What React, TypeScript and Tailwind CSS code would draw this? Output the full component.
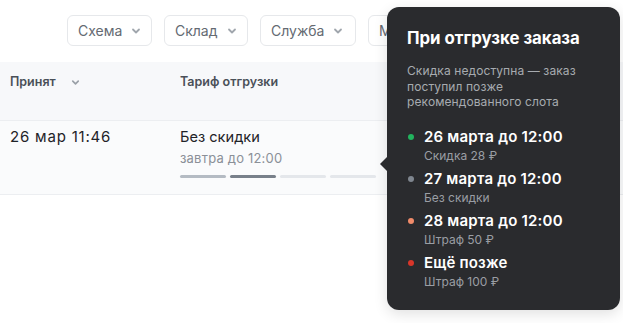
const font = { fontFamily: 'Inter, "Noto Sans", sans-serif' };

function Chevron({ className }: { className?: string }) {
  return (
    <svg viewBox="0 0 12 12" className={className} fill="none" stroke="currentColor" strokeWidth="1.8" strokeLinecap="round" strokeLinejoin="round">
      <path d="M3 4.5 6 7.5 9 4.5" />
    </svg>
  );
}

function FilterButton({ label, width }: { label: string; width: string }) {
  return (
    <button
      type="button"
      className={`flex h-[31px] ${width} shrink-0 items-center gap-2 overflow-hidden rounded-md border border-[#e6e8eb] bg-white pl-[10px] text-[14px] text-[#646a72]`}
    >
      {label}
      <Chevron className="h-3 w-3 text-[#a0a6ad]" />
    </button>
  );
}

const slots = [
  { color: "bg-[#22b35e]", title: "26 марта до 12:00", note: "Скидка 28 ₽" },
  { color: "bg-[#7f868f]", title: "27 марта до 12:00", note: "Без скидки" },
  { color: "bg-[#f08b6a]", title: "28 марта до 12:00", note: "Штраф 50 ₽" },
  { color: "bg-[#d8362a]", title: "Ещё позже", note: "Штраф 100 ₽" },
];

function Tooltip() {
  return (
    <div className="absolute left-[387px] top-[7px] h-[303px] w-[233px] rounded-xl bg-[#2a2b2e] px-5 pt-[21px] shadow-[0_4px_14px_rgba(0,0,0,0.12)]">
      <div className="absolute left-[-7px] top-[150px] h-0 w-0 border-y-[7px] border-r-[7px] border-y-transparent border-r-[#2a2b2e]" />
      <div className="text-[16.8px] font-bold leading-5 text-white">При отгрузке заказа</div>
      <p className="mt-[15px] text-[12px] leading-[15.5px] tracking-[0.1px] text-[#a7abb0]">
        Скидка недоступна — заказ поступил позже рекомендованного слота
      </p>
      <ul className="mt-[17px] flex flex-col">
        {slots.map((s) => (
          <li key={s.title} className="flex h-[42px] gap-[10px]">
            <span className={`ml-[1px] mt-[7px] h-[6px] w-[6px] shrink-0 rounded-full ${s.color}`} />
            <div>
              <div className="text-[15px] font-semibold leading-[20px] tracking-[0.2px] text-white">{s.title}</div>
              <div className="text-[12px] leading-[17px] text-[#9a9ea4]">{s.note}</div>
            </div>
          </li>
        ))}
      </ul>
    </div>
  );
}

export default function App() {
  return (
    <div className="relative h-[323px] w-[623px] overflow-hidden bg-white" style={font}>
      <div className="flex gap-3 pl-[67px] pt-[15px]">
        <FilterButton label="Схема" width="w-[85px]" />
        <FilterButton label="Склад" width="w-[84px]" />
        <FilterButton label="Служба" width="w-[96px]" />
        <FilterButton label="М" width="w-[40px]" />
      </div>

      <div className="mt-[16px] flex h-[58px] items-start bg-[#f7f8fa] pt-[11px] text-[12.5px] font-semibold text-[#4a5058]">
        <div className="flex w-[180px] items-center gap-[14px] pl-[10px]">
          Принят
          <Chevron className="h-[11px] w-[11px] text-[#9aa0a7]" />
        </div>
        <div>Тариф отгрузки</div>
      </div>

      <div className="flex h-[75px] border-y border-[#eceef1] bg-[#fafbfc] pt-[6px]">
        <div className="w-[180px] pl-[10px] text-[15px] leading-5 tracking-[0.8px] text-[#1f2328]">26 мар 11:46</div>
        <div>
          <div className="text-[14.6px] leading-5 text-[#1f2328]">Без скидки</div>
          <div className="mt-[1px] text-[13px] leading-5 tracking-[0.2px] text-[#8a9098]">завтра до 12:00</div>
          <div className="mt-[7px] flex gap-[4px]">
            <span className="h-[3px] w-[46px] rounded-full bg-[#b4bbc3]" />
            <span className="h-[3px] w-[46px] rounded-full bg-[#78808a]" />
            <span className="h-[3px] w-[46px] rounded-full bg-[#e4e7eb]" />
            <span className="h-[3px] w-[46px] rounded-full bg-[#e4e7eb]" />
          </div>
        </div>
      </div>

      <Tooltip />
    </div>
  );
}
